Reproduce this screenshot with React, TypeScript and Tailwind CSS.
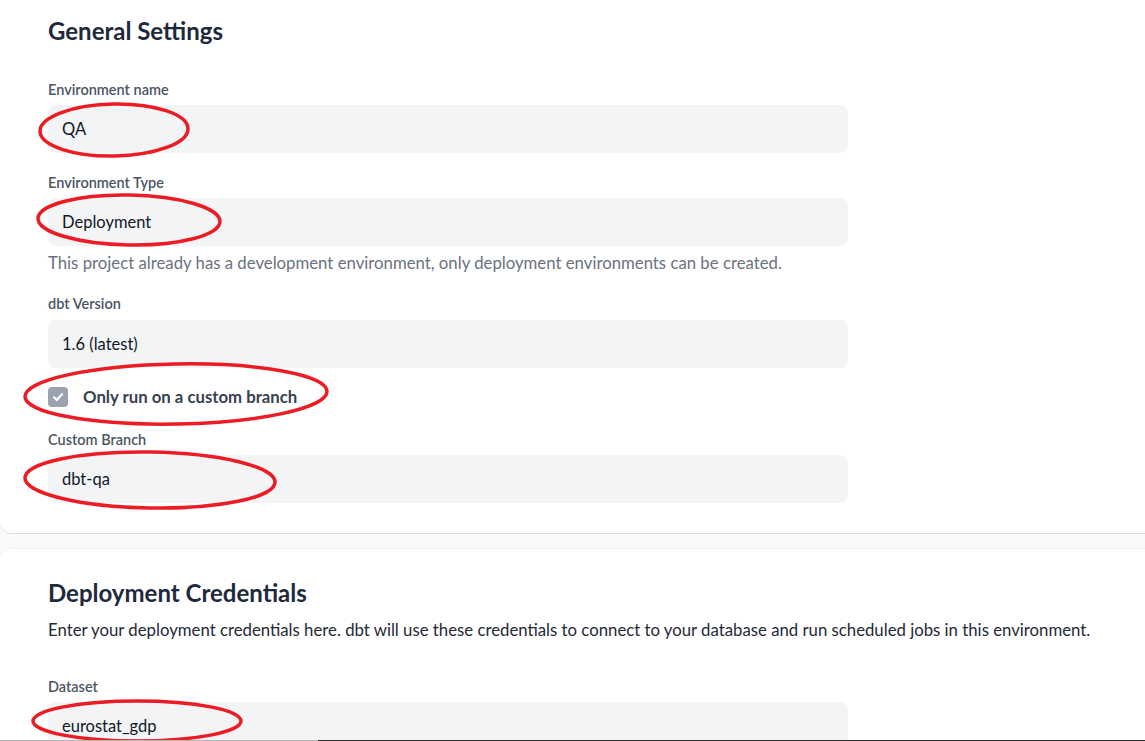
import React from "react";

function Label({ children, className = "" }: { children: React.ReactNode; className?: string }) {
  return (
    <div className={`text-[14.5px] leading-5 font-semibold text-[#4b5563] ${className}`}>{children}</div>
  );
}

function Field({ value }: { value: string }) {
  return (
    <div className="w-[800px] h-12 rounded-lg bg-[#f3f4f6] flex items-center px-[14px] text-[16.5px] text-[#111827]">
      {value}
    </div>
  );
}

export default function App() {
  return (
    <div className="relative min-h-screen bg-[#f8f9fa] overflow-hidden font-['Lato','Liberation_Sans',sans-serif]">
      {/* General settings card */}
      <section className="bg-white rounded-bl-xl border-b border-[#dcdcdc] px-12 pt-[15px] pb-[30px]">
        <h2 className="text-2xl leading-8 font-bold text-[#1e293b]">General Settings</h2>

        <Label className="mt-[33px] mb-[5px]">Environment name</Label>
        <Field value="QA" />

        <Label className="mt-5 mb-[5px]">Environment Type</Label>
        <Field value="Deployment" />
        <p className="mt-[5px] text-[16.75px] leading-6 text-[#6b7280]">
          This project already has a development environment, only deployment environments can be created.
        </p>

        <Label className="mt-[19px] mb-[6px]">dbt Version</Label>
        <Field value="1.6 (latest)" />

        <div className="mt-[17px] h-6 flex items-center gap-[15px]">
          <div className="w-5 h-5 rounded-[4px] bg-[#9ca3af] flex items-center justify-center">
            <svg width="14" height="14" viewBox="0 0 14 14" fill="none">
              <path d="M3 7.3 L5.8 10 L11 4.2" stroke="white" strokeWidth="2.2" strokeLinecap="round" strokeLinejoin="round" />
            </svg>
          </div>
          <span className="text-[16.75px] font-bold text-[#374151]">Only run on a custom branch</span>
        </div>

        <Label className="mt-[21px] mb-[5px]">Custom Branch</Label>
        <Field value="dbt-qa" />
      </section>

      {/* Deployment credentials card */}
      <section className="mt-[14px] bg-white rounded-tl-xl border-t border-[#eef0f2] px-12 pt-[28px] pb-10">
        <h2 className="text-2xl leading-8 font-bold text-[#1e293b]">Deployment Credentials</h2>
        <p className="mt-[9px] text-[16.75px] leading-6 text-[#1f2937]">
          Enter your deployment credentials here. dbt will use these credentials to connect to your database and run scheduled jobs in this environment.
        </p>
        <Label className="mt-[35px] mb-[5px]">Dataset</Label>
        <Field value="eurostat_gdp" />
      </section>

      {/* annotation overlay */}
      <svg className="absolute left-0 top-0 pointer-events-none" width="1145" height="741" viewBox="0 0 1145 741">
        <g fill="none" stroke="#ec1c24" strokeWidth="3.5">
          <ellipse cx="114" cy="130" rx="74" ry="26" transform="rotate(-1 114 130)" />
          <ellipse cx="129" cy="220" rx="91" ry="25" transform="rotate(1 129 220)" />
          <ellipse cx="176" cy="394" rx="151" ry="30" transform="rotate(-1 176 394)" />
          <ellipse cx="150" cy="480" rx="125" ry="28" transform="rotate(1 150 480)" />
          <ellipse cx="137" cy="721" rx="104" ry="20" />
        </g>
        <line x1="0" y1="740.5" x2="318" y2="740.5" stroke="#b5b5b5" strokeWidth="1" />
        <line x1="318" y1="740.5" x2="1145" y2="740.5" stroke="#2b2b2b" strokeWidth="1" />
      </svg>
    </div>
  );
}
